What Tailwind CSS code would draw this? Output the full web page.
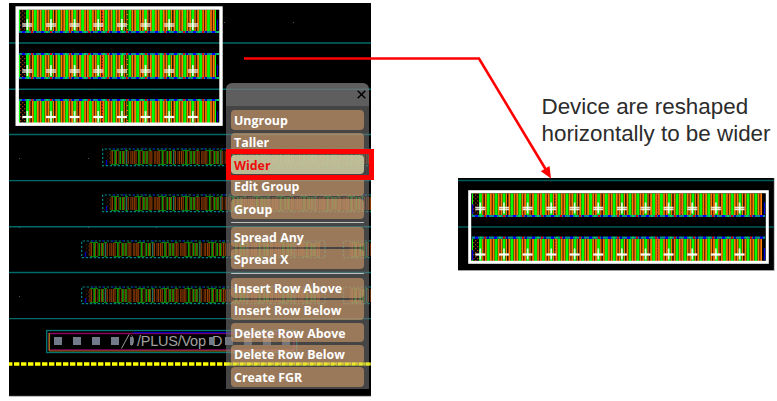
<!DOCTYPE html>
<html lang="en">
<head>
<meta charset="utf-8">
<title>Reshape group</title>
<script src="https://cdn.jsdelivr.net/npm/@tailwindcss/browser@4"></script>
</head>
<body class="relative w-[777px] h-[401px] overflow-hidden bg-white">
<svg class="absolute inset-0" width="777" height="401" viewBox="0 0 777 401">
  <defs>
    <pattern id="edge" width="19" height="2" patternUnits="userSpaceOnUse">
      <rect width="19" height="2" fill="#008c96"/>
      <rect x="3" width="3" height="2" fill="#0000ff"/><rect x="8" width="2" height="2" fill="#00d060"/><rect x="12" width="2" height="2" fill="#d00020"/><rect x="15" width="2" height="2" fill="#0000c0"/>
    </pattern>
    <pattern id="speck" width="4" height="4" patternUnits="userSpaceOnUse">
      <rect width="4" height="4" fill="#000"/><rect width="1.3" height="1.3" fill="#a03c00"/><rect x="2" y="2" width="1.3" height="1.3" fill="#a03c00"/>
    </pattern>
    <!-- transistor fingers: gate, diffusion, contact column -->
    <g id="fins" stroke-width="22">
      <path d="M18.200 0H310" stroke="#180c00"/>
      <path d="M21.300 0H310" stroke="#ff7d00" stroke-dasharray="4.500 3.370"/>
      <path d="M22.900 0H310" stroke="#5a1c00" stroke-dasharray="1.200 6.670"/>
      <path d="M18.200 0H310" stroke="#00ff00" stroke-dasharray="2.800 5.070"/>
      <path d="M30.400 0H310" stroke="#301000" stroke-dasharray="1 22.610"/>
      <path d="M42 0H310" stroke="#00e800" stroke-dasharray="1.200 46"/>
      <rect x="20" y="-11" width="6" height="22" fill="url(#speck)"/>
    </g>
    <clipPath id="c8"><rect x="19" y="-11" width="197" height="22"/></clipPath>
    <clipPath id="c12"><rect x="19" y="-11" width="290" height="22"/></clipPath>
    <g id="fins8"><g clip-path="url(#c8)"><use href="#fins"/></g><path d="M217.500-1V10" stroke="#0000c0" stroke-width="1.300"/></g>
    <g id="fins12"><g clip-path="url(#c12)"><use href="#fins"/></g><path d="M311.500-2V10M19.600 0V10" stroke="#0000e0" stroke-width="1.300"/></g>
    <g id="dim" stroke-width="13" fill="none">
      <path d="M1 0H262" stroke="#903e00" stroke-dasharray="3 1 3 1.500 2.500 .8"/>
      <path d="M2.200 0H262" stroke="#381400" stroke-dasharray=".9 3.100 .9 2.970"/>
      <path d="M4.500 0H262" stroke="#000" stroke-dasharray="1 22.600"/>
      <path d="M5.500 0H262" stroke="#009800" stroke-dasharray="1.500 3.500 1.500 1.800 1.300 14"/>
      <path d="M16.800 0H262" stroke="#008080" stroke-opacity=".8" stroke-dasharray="1.200 46"/>
      <path d="M2 -7H262M2 7H262" stroke="#008000" stroke-width="1" stroke-dasharray="8 6 3 6.600"/>
      <rect x="-3" y="-6" width="5" height="12" fill="url(#speck)" opacity=".55"/>
    </g>
    <clipPath id="long"><rect x="-4" y="-9" width="236" height="18"/></clipPath>
    <clipPath id="end"><rect x="0" y="-9" width="22" height="18"/></clipPath>
    <g id="plusV"><path d="M0-6V5" stroke="#fff" stroke-opacity=".85" stroke-width="1.700"/></g>
    <g id="plus"><path d="M-5-1.200H5M-5 1.200H5" stroke="#fff" stroke-opacity=".85" stroke-width="1.300"/><path d="M-5 0H5" stroke="#fff" stroke-opacity=".5" stroke-width="1.200"/><use href="#plusV"/></g>
    <g id="solid"><path d="M-5 0H5" stroke="#fff" stroke-width="2.200"/><use href="#plusV"/></g>
    <g id="plus4"><use href="#plus"/><use href="#plus" x="23.650"/><use href="#plus" x="47.300"/><use href="#plus" x="70.950"/></g>
    <g id="solid4"><use href="#solid"/><use href="#solid" x="23.650"/><use href="#solid" x="47.300"/><use href="#solid" x="70.950"/></g>
  </defs>

  <!-- layout canvas -->
  <rect x="9" y="3" width="362" height="393" fill="#000"/>
  <path d="M9 396.300H371" stroke="#999" stroke-width=".8"/>
  <path d="M9 43H371M9 89.300H371M9 134.500H371M9 180.600H371M9 226.700H371M9 272.500H371M9 318.600H371" stroke="#006a6a" stroke-width="1.400"/>
  <g fill="#555"><path d="M19 89h1v1h-1zM88 89h1v1h-1zM156 89h1v1h-1zM224 22h1v1h-1zM293 22h1v1h-1zM19 158h1v1h-1zM88 158h1v1h-1zM19 227h1v1h-1zM88 227h1v1h-1zM156 227h1v1h-1zM19 296h1v1h-1z"/></g>

  <!-- grouped devices, three rows -->
  <use href="#fins8" y="20.500"/><rect x="19" y="31" width="200" height="2" fill="url(#edge)"/>
  <rect x="19" y="53" width="200" height="2" fill="url(#edge)"/><use href="#fins8" y="66"/><rect x="19" y="77" width="200" height="2" fill="url(#edge)"/>
  <rect x="19" y="99" width="200" height="2" fill="url(#edge)"/><use href="#fins8" y="112"/>
  <path d="M102.500 10V31M102.500 55V77M102.500 101V122" stroke="#ff3020" stroke-width="1.300" stroke-dasharray="2 1"/>
  <path d="M127.500 10V31M127.500 55V77M127.500 101V122" stroke="#006000" stroke-width="1.500" stroke-dasharray="4 1"/>
  <use href="#plus4" x="27.300" y="25"/><use href="#plus4" x="121.900" y="25"/>
  <use href="#plus4" x="27.300" y="71"/><use href="#plus4" x="121.900" y="71"/>
  <use href="#solid4" x="27.300" y="117"/><use href="#solid4" x="121.900" y="117"/>
  <rect x="17.200" y="8" width="203.800" height="116.200" fill="none" stroke="#fff" stroke-width="3.400"/>

  <!-- ungrouped devices -->
  <g>
    <use href="#dim" x="109" y="157.500"/><use href="#dim" x="109" y="203.500"/>
    <g transform="translate(88 249.500)" clip-path="url(#long)"><use href="#dim"/></g><g transform="translate(349 249.500)" clip-path="url(#end)"><use href="#dim"/></g>
    <g transform="translate(88 295.500)" clip-path="url(#long)"><use href="#dim"/></g><g transform="translate(349 295.500)" clip-path="url(#end)"><use href="#dim"/></g>
    <path d="M371 149H102.700V165.700H371M371 195H102.700V211.700H371M325 241H81.700V257.700H325ZM371 241H343.500V257.700H371M325 287H81.700V303.700H325ZM371 287H343.500V303.700H371" fill="none" stroke="#008282" stroke-width="1.200" stroke-dasharray="2.400 1.600"/>
    <path d="M113 148.900H371M113 194.900H371M92 240.900H321M92 286.900H321" stroke="#0000a0" stroke-width="1.200" stroke-dasharray="2 8"/>
    <path d="M106.500 160V165M106.500 206V211M85.500 252V257M85.500 298V303" stroke="#0000c0" stroke-width="1.300"/>
  </g>

  <!-- pin label -->
  <rect x="46.700" y="330.500" width="250" height="22" fill="none" stroke="#007878" stroke-width="1.300"/>
  <path d="M49 333.500H294V350H49Z" fill="none" stroke="#900060" stroke-width="1.300"/>
  <path d="M49.300 333V350.500" stroke="#907010" stroke-width="1.500"/><path d="M49 351H294" stroke="#907010" stroke-width="1"/>
  <path d="M133 332.700H294" stroke="#0000b0" stroke-width="1.300"/>
  <path d="M54 337h8v8h-8zM73 337h8v8h-8zM92 337h8v8h-8zM111 337h8v8h-8zM130 337h3v8h-3zM209 337h4v8h-4zM225 337h8v8h-8zM244 337h8v8h-8zM263 337h8v8h-8zM282 337h8v8h-8z" fill="#727a8a"/>
  <path d="M121.500 348.500L129 334.500M131.500 335.500C134 338 134 343 131.500 345.500" fill="none" stroke="#999" stroke-width="1"/>
  <g fill="#a0a0a0" font-family="'Liberation Sans',sans-serif" font-size="14.500">
    <text x="137" y="346" textLength="69">/PLUS/Vop</text><text x="212" y="346">D</text>
  </g>
  <path d="M9 364H371" stroke="#ffff00" stroke-width="3.500" stroke-dasharray="5.400 1.600" stroke-dashoffset="2"/>

  <!-- reshaped result, two wider rows -->
  <rect x="458" y="178" width="316" height="92.500" fill="#000"/>
  <path d="M458 270.500H774.300V178" fill="none" stroke="#aaa" stroke-width=".8"/>
  <path d="M458 180.500H774M458 227H774" stroke="#005a5a" stroke-width="1.400"/>
  <g transform="translate(453 183.500)">
    <use href="#fins12" y="20.800"/><rect x="19" y="31.500" width="293" height="2" fill="url(#edge)"/>
    <rect x="19" y="53" width="293" height="2.300" fill="url(#edge)"/><use href="#fins12" y="66.500"/>
    <path d="M102.500 10V31M102.500 55V77M205 10V31M205 55V77M229 10V31M229 55V77" stroke="#ff5030" stroke-width="1.300" stroke-dasharray="2 1"/>
  </g>
  <use href="#plus4" x="480.300" y="208.500"/><use href="#plus4" x="574.600" y="208.500"/><use href="#plus4" x="668.600" y="208.500"/>
  <use href="#solid4" x="480.300" y="254.500"/><use href="#solid4" x="574.600" y="254.500"/><use href="#solid4" x="668.600" y="254.500"/>
  <rect x="469.700" y="191.700" width="297.600" height="70.600" fill="none" stroke="#fff" stroke-width="3"/>

  <path d="M244 58.500H479L545.500 169" fill="none" stroke="#f00" stroke-width="2.600"/>
  <path d="M551 178.500L540.800 171.300L549.500 166Z" fill="#f00"/>
</svg>

<!-- context menu -->
<div class="absolute left-[226px] top-[83px] w-[143px] h-[306px] flex flex-col rounded-t-[6px] overflow-hidden font-['Open_Sans',sans-serif] font-bold text-[12.4px] text-white">
  <div class="h-[23px] shrink-0 bg-[#767676]/80 flex justify-end pt-[6.5px] pr-[3.5px]">
    <svg width="9" height="9" viewBox="0 0 9 9"><path d="M.7.7 8.300 8.300M8.300.7.7 8.300" stroke="#000" stroke-width="1.500"/></svg>
  </div>
  <div class="flex-1 bg-[#737373]/60 px-[5px] pt-[4px] flex flex-col leading-[22px] *:shrink-0 *:pl-[3px] *:rounded-[4px]">
    <div class="h-[20px] mb-[3px] bg-[#d49d6b]/60">Ungroup</div>
    <div class="h-[19px] mb-[3px] bg-[#d49d6b]/60 leading-[20px]">Taller</div>
    <div class="h-[19px] mb-[3px] bg-[#c8c69d]/90 text-[#f00c0c]">Wider</div>
    <div class="h-[19px] mb-[3px] bg-[#d49d6b]/60 leading-[20px]">Edit Group</div>
    <div class="h-[20px] mb-[3px] bg-[#d49d6b]/60">Group</div>
    <div class="h-px mb-[4px] bg-[#c0c0c0]"></div>
    <div class="h-[20px] mb-[2px] bg-[#d49d6b]/60">Spread Any</div>
    <div class="h-[20px] mb-[4px] bg-[#d49d6b]/60">Spread X</div>
    <div class="h-px mb-[4px] bg-[#c0c0c0]"></div>
    <div class="h-[20px] mb-[2px] bg-[#d49d6b]/60">Insert Row Above</div>
    <div class="h-[20px] mb-[3px] bg-[#d49d6b]/60">Insert Row Below</div>
    <div class="h-[19px] mb-[3px] bg-[#d49d6b]/60">Delete Row Above</div>
    <div class="h-[19px] mb-[3px] bg-[#d49d6b]/60 leading-[20px]">Delete Row Below</div>
    <div class="h-[20px] bg-[#d49d6b]/60">Create FGR</div>
  </div>
</div>
<svg class="absolute left-[226px] top-[362px]" width="145" height="4"><path d="M0 2H145" stroke="#ffff20" stroke-opacity=".7" stroke-width="3" stroke-dasharray="5.400 1.600"/></svg>
<div class="absolute left-[226px] top-[149px] w-[148px] h-[31px] border-5 border-[#f00]"></div>

<p class="absolute left-[541.5px] top-[94px] whitespace-nowrap font-['Liberation_Sans',Arial,sans-serif] text-[22.4px] leading-[26.5px] text-[#2c2c2c]">Device are reshaped<br>horizontally to be wider</p>
</body>
</html>
